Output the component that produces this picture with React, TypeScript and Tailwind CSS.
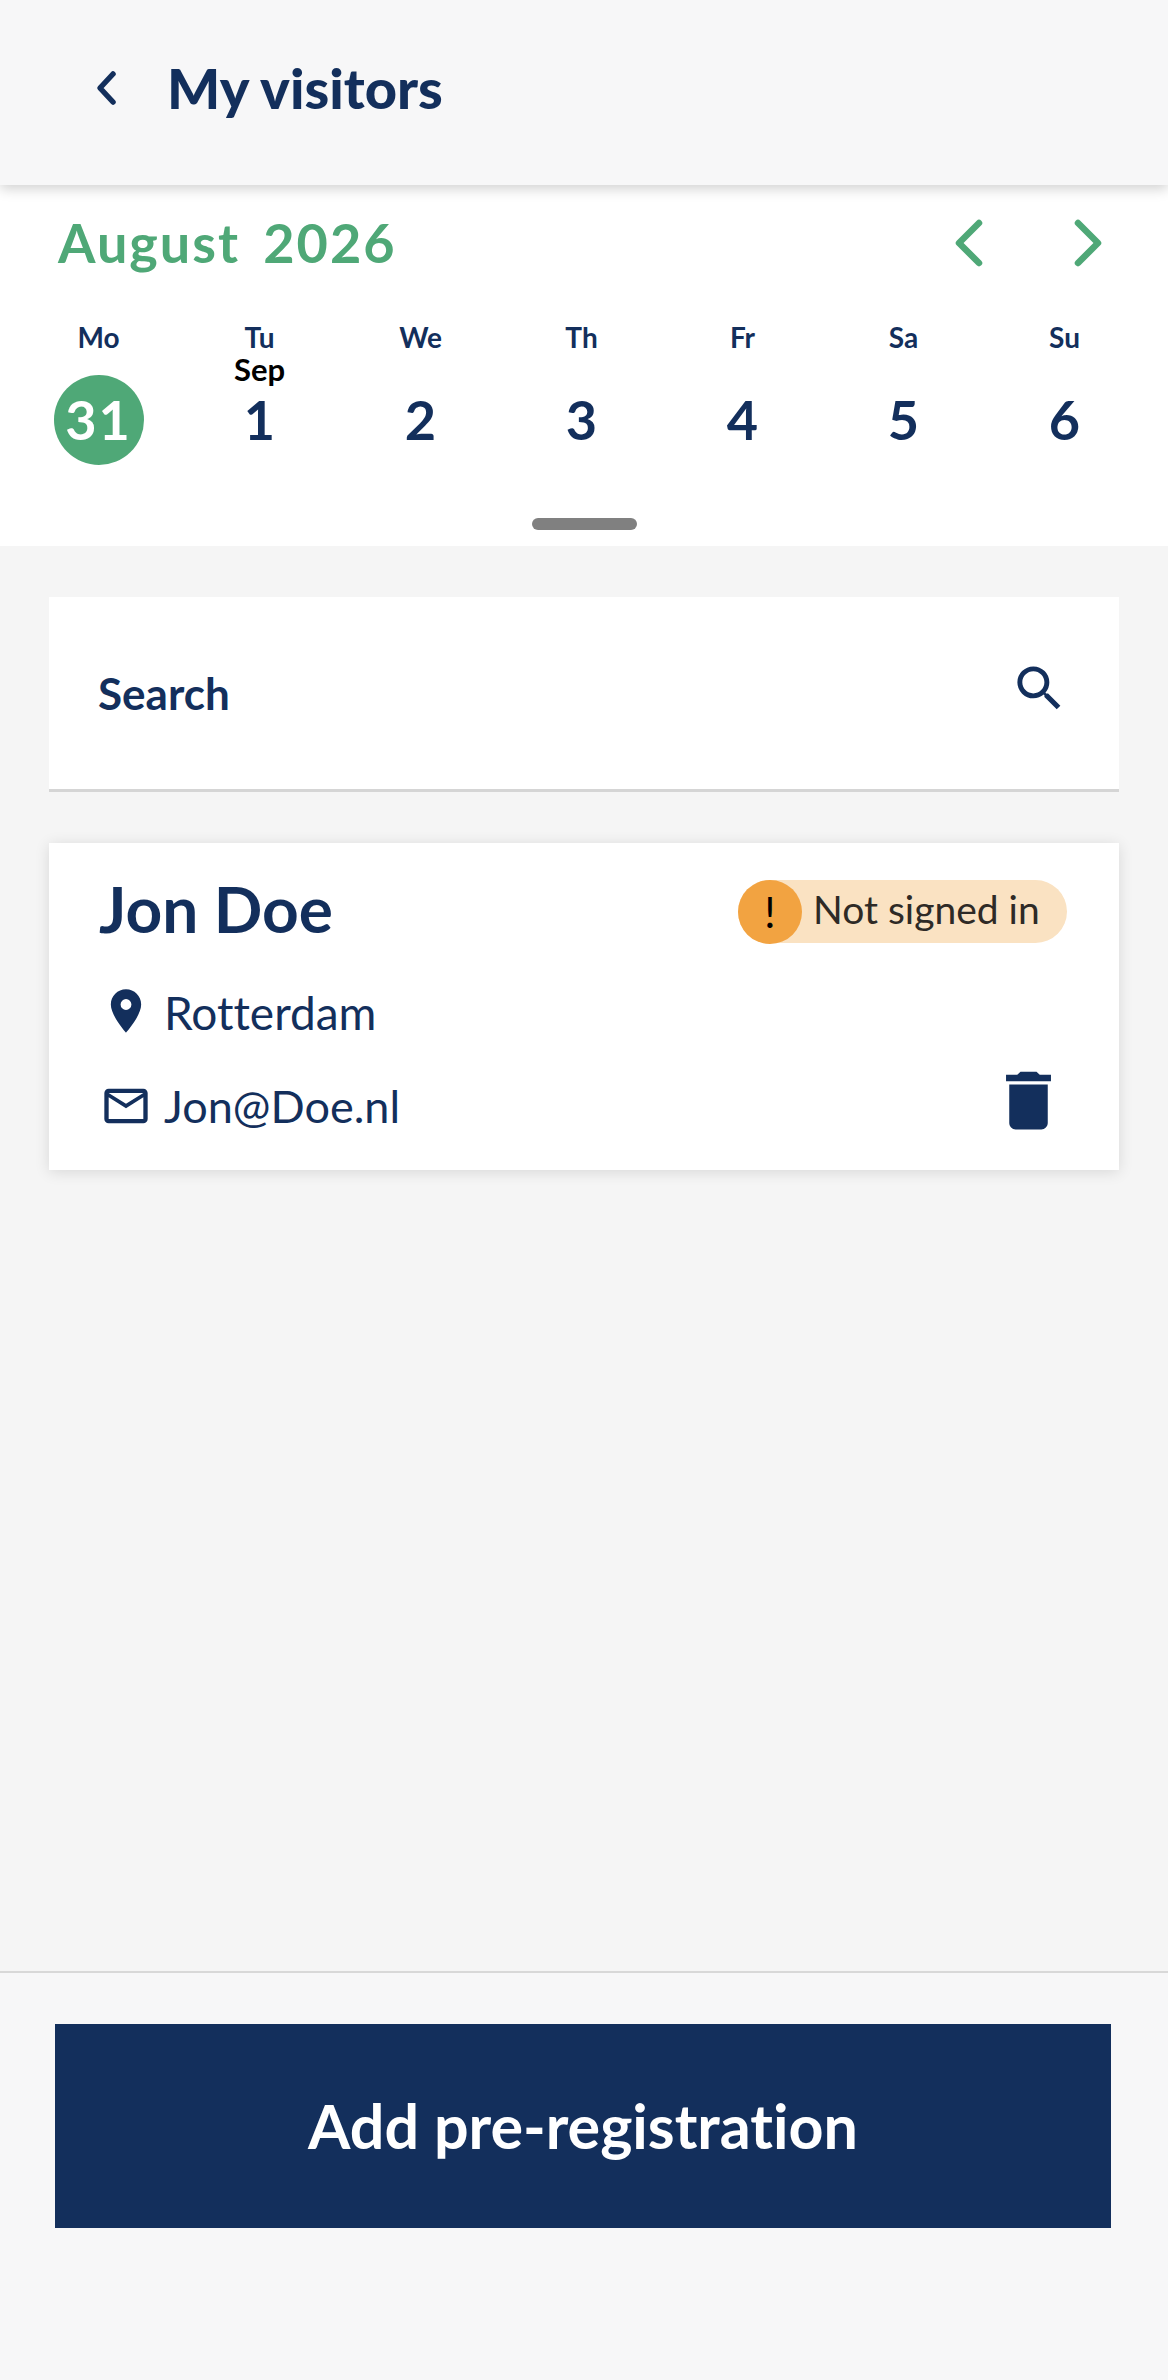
import { MdDelete, MdMailOutline, MdPlace, MdSearch } from "react-icons/md";

const days = [
  { label: "Mo", date: "31", active: true },
  { label: "Tu", date: "1", month: "Sep" },
  { label: "We", date: "2" },
  { label: "Th", date: "3" },
  { label: "Fr", date: "4" },
  { label: "Sa", date: "5" },
  { label: "Su", date: "6" },
];

function Chevron({ dir, className }: { dir: "left" | "right"; className: string }) {
  return (
    <svg viewBox="0 0 28 48" className={className} fill="none" stroke="currentColor" strokeWidth="6.5" strokeLinecap="round" strokeLinejoin="round">
      <path d={dir === "left" ? "M24 4 L4 24 L24 44" : "M4 4 L24 24 L4 44"} />
    </svg>
  );
}

export default function App() {
  return (
    <div className="flex h-[2380px] w-[1168px] flex-col overflow-hidden bg-[#f5f5f5] font-['Lato',sans-serif] text-[#132f5c] [font-variant-ligatures:none]">
      <header className="relative z-10 flex h-[185px] shrink-0 items-center bg-[#f7f7f8] pb-[9px] pl-[95px] shadow-[0_4px_12px_rgba(0,0,0,0.18)]">
        <svg viewBox="0 0 22 36" className="h-9 w-[22px]" fill="none" stroke="currentColor" strokeWidth="5.5" strokeLinecap="round" strokeLinejoin="round">
          <path d="M18 4 L5 18 L18 32" />
        </svg>
        <h1 className="ml-[50px] text-[56px] font-black leading-none">My visitors</h1>
      </header>

      <section className="h-[361px] shrink-0 bg-white">
        <div className="flex h-[105px] items-center pl-[58px] pt-[10px]">
          <span className="text-[54px] font-bold leading-none tracking-[2px] text-[#4fa877] [word-spacing:8px]">August 2026</span>
          <Chevron dir="left" className="ml-auto h-12 w-7 text-[#4fa877]" />
          <Chevron dir="right" className="ml-[91px] mr-[66px] h-12 w-7 text-[#4fa877]" />
        </div>
        <div className="ml-[18px] grid w-[1127px] grid-cols-7">
          {days.map((d) => (
            <div key={d.label} className="flex flex-col items-center">
              <span className="mt-[30px] h-[34px] text-[28px] font-bold leading-[34px]">{d.label}</span>
              <span className="h-[30px] text-[31px] font-bold leading-[30px] text-black">{d.month ?? ""}</span>
              <span
                className={
                  d.active
                    ? "-mt-[9px] flex h-[90px] w-[90px] items-center justify-center rounded-full bg-[#4fa877] text-[54px] font-bold leading-none tracking-[2px] text-white"
                    : "-mt-[9px] flex h-[90px] items-center justify-center text-[54px] font-bold leading-none"
                }
              >
                {d.date}
              </span>
            </div>
          ))}
        </div>
        <div className="mx-auto mt-[53px] h-3 w-[105px] rounded-md bg-[#808080]" />
      </section>

      <main className="flex-1 px-[49px] pt-[51px]">
        <div className="flex h-[195px] items-center justify-between border-b-[3px] border-[#d5d5d5] bg-white pl-[49px] pr-[50px]">
          <span className="text-[44px] font-bold">Search</span>
          <MdSearch className="-mt-[10px] h-[59px] w-[59px]" />
        </div>

        <div className="mt-[51px] h-[327px] bg-white pl-[50px] pr-[52px] pt-[37px] shadow-[0_2px_14px_rgba(0,0,0,0.12)]">
          <div className="flex items-center justify-between">
            <span className="-mt-[5px] text-[64px] font-bold leading-[64px]">Jon Doe</span>
            <div className="flex h-[63px] w-[329px] items-center rounded-full bg-[#fae2c2]">
              <span className="flex h-16 w-16 shrink-0 items-center justify-center rounded-full bg-[#f2a341] text-[42px] leading-none text-black">!</span>
              <span className="-mt-[4px] ml-[11px] text-[39px] leading-none text-[#2e2a26]">Not signed in</span>
            </div>
          </div>
          <div className="mt-[42px] flex h-[52px] items-center gap-[12px] pl-px text-[46px]">
            <MdPlace className="h-[52px] w-[52px]" />
            <span className="mt-[2px]">Rotterdam</span>
          </div>
          <div className="mt-[43px] flex h-[52px] items-center pl-px text-[45px]">
            <MdMailOutline className="h-[52px] w-[52px]" />
            <span className="ml-[12px] mt-[2px]">Jon@Doe.nl</span>
            <MdDelete className="-mb-[7px] -mt-[18px] ml-auto h-[77px] w-[77px]" />
          </div>
        </div>
      </main>

      <footer className="h-[409px] shrink-0 border-t-2 border-[#d8d8d8] bg-[#f7f7f8] px-[55px] pt-[51px]">
        <button className="flex h-[204px] w-[1056px] items-center justify-center bg-[#132f5c] text-[61px] font-bold text-white">
          Add pre-registration
        </button>
      </footer>
    </div>
  );
}
